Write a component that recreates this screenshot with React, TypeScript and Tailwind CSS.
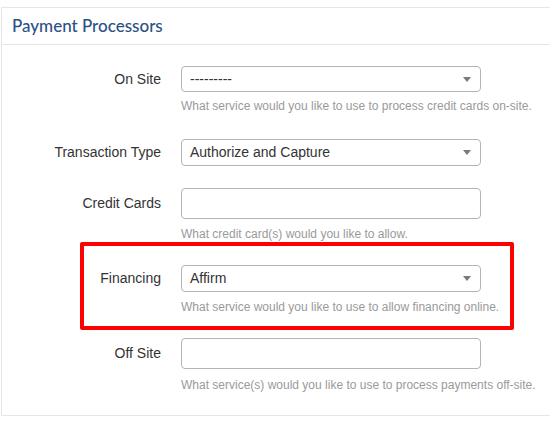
import { ReactNode } from "react";

// ---------- FIELD PIECES ----------
function Select({ value, h = "h-[26px]" }: { value: string; h?: string }) {
  return (
    <div
      className={`${h} w-[300px] flex items-center justify-between rounded-[4px] border border-[#b4b4b4] bg-white pl-[8px] pr-[8px] text-[14px] text-[#333]`}
    >
      <span>{value}</span>
      <svg width="8" height="5" viewBox="0 0 8 5" className="mr-[1px]">
        <path d="M0 0 L8 0 L4 5 Z" fill="#7a7a7a" />
      </svg>
    </div>
  );
}

function TextBox() {
  return (
    <div className="h-[31px] w-[300px] rounded-[4px] border border-[#b4b4b4] bg-white" />
  );
}

function Row({
  label,
  mt,
  help,
  helpMt = "mt-[7px]",
  children,
}: {
  label: string;
  mt: string;
  help?: string;
  helpMt?: string;
  children: ReactNode;
}) {
  return (
    <div className={`flex ${mt}`}>
      <div className="w-[159px] shrink-0" />
      <div className="ml-[20px] flex flex-col">
        <div className="relative">
          {/* label sits centred on the control, right-aligned to the column */}
          <div className="absolute right-[calc(100%+20px)] top-0 bottom-0 flex items-center whitespace-nowrap text-[14px] text-[#333]">
            {label}
          </div>
          {children}
        </div>
        {help && (
          <div className={`${helpMt} text-[12px] leading-[17px] text-[#9a9a9a] whitespace-nowrap`}>
            {help}
          </div>
        )}
      </div>
    </div>
  );
}

// ---------- MAIN ----------
export default function App() {
  return (
    <div
      className="relative w-[550px] h-[428px] bg-white overflow-hidden"
      style={{ fontFamily: '"Liberation Sans", Arial, sans-serif' }}
    >
      <div className="mt-[7px] ml-[1px] border-t border-l border-b border-[#e6e6e6]">
        {/* Header */}
        <div className="h-[37px] border-b border-[#e6e6e6] flex items-center pl-[10px]">
          <h2
            className="text-[17px] text-[#2b5186] font-medium"
            style={{ fontFamily: 'Lato, "Open Sans", sans-serif' }}
          >
            Payment Processors
          </h2>
        </div>

        {/* Body */}
        <div className="pb-[21px]">
          <Row
            label="On Site"
            mt="mt-[21px]"
            help="What service would you like to use to process credit cards on-site."
            helpMt="mt-[6px]"
          >
            <Select value="---------" />
          </Row>

          <Row label="Transaction Type" mt="mt-[24px]">
            <Select value="Authorize and Capture" h="h-[27px]" />
          </Row>

          <Row
            label="Credit Cards"
            mt="mt-[22px]"
            help="What credit card(s) would you like to allow."
          >
            <TextBox />
          </Row>

          <Row
            label="Financing"
            mt="mt-[22px]"
            help="What service would you like to use to allow financing online."
          >
            <Select value="Affirm" h="h-[27px]" />
          </Row>

          <Row
            label="Off Site"
            mt="mt-[22px]"
            help="What service(s) would you like to use to process payments off-site."
            helpMt="mt-[8px]"
          >
            <TextBox />
          </Row>
        </div>
      </div>

      {/* highlight annotation */}
      <div className="absolute left-[80px] top-[242px] w-[434px] h-[88px] border-[4px] border-[#ff0000] rounded-[2px] pointer-events-none" />
    </div>
  );
}
